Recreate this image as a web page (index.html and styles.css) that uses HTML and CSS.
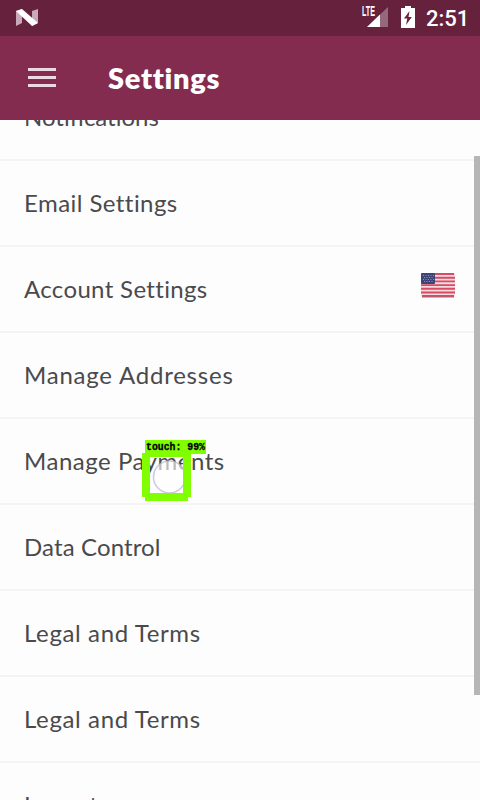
FILE: index.html
```html
<!DOCTYPE html>
<html lang="en">
<head>
<meta charset="utf-8">
<title>Settings</title>
<link rel="stylesheet" href="styles.css">
</head>
<body>
<div class="screen">
  <header class="status">
    <svg class="n-logo" width="24" height="20" viewBox="0 0 24 20"><path d="M1 3l6-2v14l-6 3zM17 3l6-2v14l-6 3z" fill="#c9a9b9"/><path d="M1 3l6-2 16 14-6 3z" fill="#fff"/></svg>
    <div class="status-right">
      <svg class="signal" width="27" height="23" viewBox="0 0 27 23"><path d="M26 2v20H5z" fill="#96687e"/><path d="M18 9.600v12.400H5z" fill="#fff"/><path d="M0-1h14v13H0z" fill="#66213c"/><text class="lte" x="0" y="11" textLength="13" lengthAdjust="spacingAndGlyphs">LTE</text></svg>
      <svg class="battery" width="14" height="22" viewBox="0 0 14 22"><path d="M4 0h6v2h4v20H0V2h4z" fill="#fff"/><path d="M8.500 5L3 12.500h3.300L5 19l5.800-8H7.500z" fill="#66213c"/></svg>
      <span class="clock">2:51</span>
    </div>
  </header>
  <div class="appbar">
    <div class="menu"><i></i><i></i><i></i></div>
    <h1>Settings</h1>
  </div>
  <main class="viewport">
    <ul class="list">
      <li class="notifications">Notifications</li>
      <li class="email">Email Settings</li>
      <li class="account">Account Settings
        <svg class="flag" width="36" height="26" viewBox="0 0 36 26">
          <rect x="1" y="1" width="34" height="24" rx="2" fill="#f5dce1"/>
          <path d="M2 2h32M1 5.700h34M1 9.400h34M1 13.100h34M1 16.800h34M1 20.500h34M2 24h32" stroke="#d84b63" stroke-width="1.900"/>
          <path d="M2 25h32" stroke="#a06b78" stroke-width="1"/>
          <rect x="1" y="1" width="14" height="11" rx="1" fill="#3e4478"/>
          <path d="M3 3.500h11M4 5.500h10M3 7.500h11M4 9.500h10" stroke="#9292b5" stroke-width="1" stroke-dasharray="1 1.500"/>
        </svg>
      </li>
      <li class="addresses">Manage Addresses</li>
      <li class="payments">Manage Payments</li>
      <li class="data">Data Control</li>
      <li class="legal">Legal and Terms</li>
      <li class="legal">Legal and Terms</li>
      <li class="logout">Logout</li>
    </ul>
    <div class="scrollbar"></div>
  </main>
  <div class="touch">
    <svg width="66" height="64" viewBox="0 0 66 64"><circle cx="27.500" cy="37" r="16" fill="#fff" fill-opacity=".62" stroke="#bdb6ce" stroke-opacity=".75" stroke-width="1.500"/><path d="M0 13h49v44h-3v4H3v-4H0zM8 17v36h33V17z" fill="#80ff00" fill-rule="evenodd"/><rect x="3" y="0" width="61" height="14" fill="#80ff00"/><text class="touch-label" x="4" y="10" textLength="59" lengthAdjust="spacingAndGlyphs" xml:space="preserve">touch: 99%</text></svg>
  </div>
</div>
</body>
</html>
```
FILE: styles.css
```css
* { box-sizing: border-box; }
body { margin: 0; }
.screen {
  position: relative;
  width: 480px;
  height: 800px;
  overflow: hidden;
  display: flex;
  flex-direction: column;
  background: #fdfdfd;
  font-family: Lato, sans-serif;
  font-variant-ligatures: none;
}
.status {
  flex: none;
  height: 36px;
  padding: 0 12px 0 15px;
  display: flex;
  align-items: center;
  justify-content: space-between;
  background: #66213c;
}
.status-right { display: flex; align-items: center; color: #fff; }
.signal { margin: -3px 12px 0 0; }
.battery { margin: -2px 11px 0 0; }
.clock { font: 500 22px/36px Roboto, sans-serif; width: 42px; white-space: nowrap; padding-top: 1px; }
.lte { font: bold 14.5px "Liberation Sans", sans-serif; fill: #fff; }
.appbar {
  flex: none;
  height: 84px;
  padding-left: 28px;
  display: flex;
  align-items: center;
  background: #842c4f;
}
.menu { width: 28px; margin-right: 52px; display: flex; flex-direction: column; gap: 5px; margin-top: -1px; }
.menu i { height: 3px; background: #ecd9e3; }
h1 { margin: -1px 0 0; color: #fff; font-size: 29px; line-height: 36px; font-weight: 800; letter-spacing: .7px; }
.viewport { position: relative; flex: 1; overflow: hidden; }
.list { list-style: none; margin: -45px 0 0; padding: 0; }
.list li {
  height: 86px;
  padding: 0 24px 2px;
  display: flex;
  align-items: center;
  justify-content: space-between;
  border-bottom: 2px solid #f4f4f5;
  font-size: 24px;
  color: #4a4a4c;
  white-space: nowrap;
}
.list .email { letter-spacing: .44px; }
.list .account { letter-spacing: .34px; }
.list .addresses { letter-spacing: .78px; }
.list .payments { letter-spacing: .52px; }
.list .data { letter-spacing: .12px; }
.list .legal { letter-spacing: .63px; }
.list .logout { letter-spacing: .2px; }
.flag { margin-top: -7px; }
.scrollbar { position: absolute; right: 0; top: 36px; width: 6px; height: 539px; background: #b6b6b6; }
.touch { position: absolute; left: 142px; top: 440px; width: 66px; height: 64px; }
.touch svg { display: block; }
.touch-label { font: bold 10.5px "Liberation Mono", monospace; fill: #000; stroke: #000; stroke-width: .3; }
```
